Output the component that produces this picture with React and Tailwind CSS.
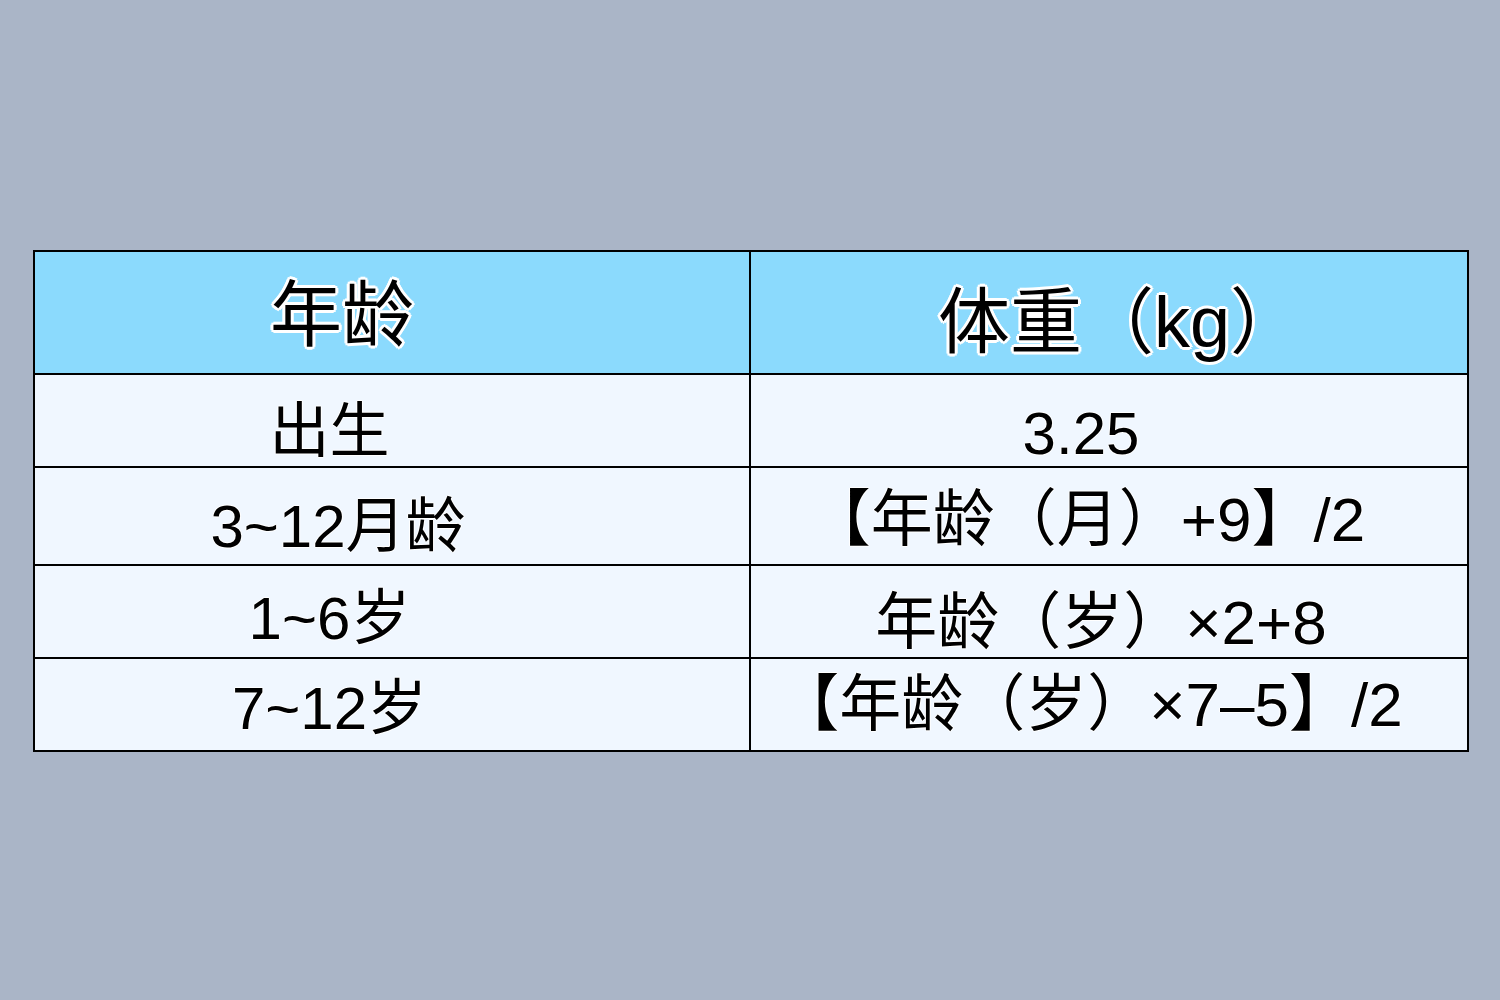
import React from "react";

const rows = [
  {
    age: "出生",
    weight: "3.25",
    h: "h-[93px]",
    leftPad: "pt-[27px] pr-[125px]",
    rightPad: "pt-[29px] pr-[56px]",
    rightSize: "text-[60px]",
  },
  {
    age: "3~12月龄",
    weight: "【年龄（月）+9】/2",
    h: "h-[98px]",
    leftPad: "pt-[29px] pr-[108px]",
    rightPad: "pt-[21px] pr-[44px]",
    rightSize: "text-[62px]",
  },
  {
    age: "1~6岁",
    weight: "年龄（岁）×2+8",
    h: "h-[93px]",
    leftPad: "pt-[23px] pr-[125px]",
    rightPad: "pt-[26px] pr-[16px]",
    rightSize: "text-[62px]",
  },
  {
    age: "7~12岁",
    weight: "【年龄（岁）×7–5】/2",
    h: "h-[93px]",
    leftPad: "pt-[20px] pr-[125px]",
    rightPad: "pt-[15px] pr-[38px]",
    rightSize: "text-[62px]",
  },
];

const fontStack = "font-['Liberation_Sans','Noto_Sans_CJK_SC',sans-serif]";
const bigHalo =
  "[text-shadow:3px_0_0_#fff,-3px_0_0_#fff,0_3px_0_#fff,0_-3px_0_#fff,2px_2px_0_#fff,-2px_-2px_0_#fff,2px_-2px_0_#fff,-2px_2px_0_#fff]";
const smallHalo =
  "[text-shadow:1px_0_0_#fff,-1px_0_0_#fff,0_1px_0_#fff,0_-1px_0_#fff]";

const App = () => {
  return (
    <div className="w-full min-h-screen bg-[#aab5c7] pt-[250px] pl-[33px]">
      {/* table */}
      <div className={`w-[1436px] border-2 border-black text-black ${fontStack}`}>
        {/* header */}
        <div className="grid grid-cols-[716px_716px] h-[121px] bg-[#8bdafd]">
          <div className="border-r-2 border-black flex items-start justify-center pr-[100px] pt-[27px]">
            <span className={`text-[72px] font-normal leading-none ${bigHalo}`}>年龄</span>
          </div>
          <div className="flex items-start justify-center pl-[22px] pt-[34px]">
            <span className={`text-[72px] font-normal leading-none whitespace-nowrap ${bigHalo}`}>
              体重（kg）
            </span>
          </div>
        </div>
        {/* body rows */}
        {rows.map((r, i) => (
          <div
            key={i}
            className={`grid grid-cols-[716px_716px] ${r.h} bg-[#f0f7ff] border-t-2 border-black`}
          >
            <div className={`border-r-2 border-black flex items-start justify-center ${r.leftPad}`}>
              <span className={`text-[60px] leading-none whitespace-nowrap ${smallHalo}`}>{r.age}</span>
            </div>
            <div className={`flex items-start justify-center ${r.rightPad}`}>
              <span className={`${r.rightSize} leading-none whitespace-nowrap ${smallHalo}`}>{r.weight}</span>
            </div>
          </div>
        ))}
      </div>
    </div>
  );
};

export default App;
